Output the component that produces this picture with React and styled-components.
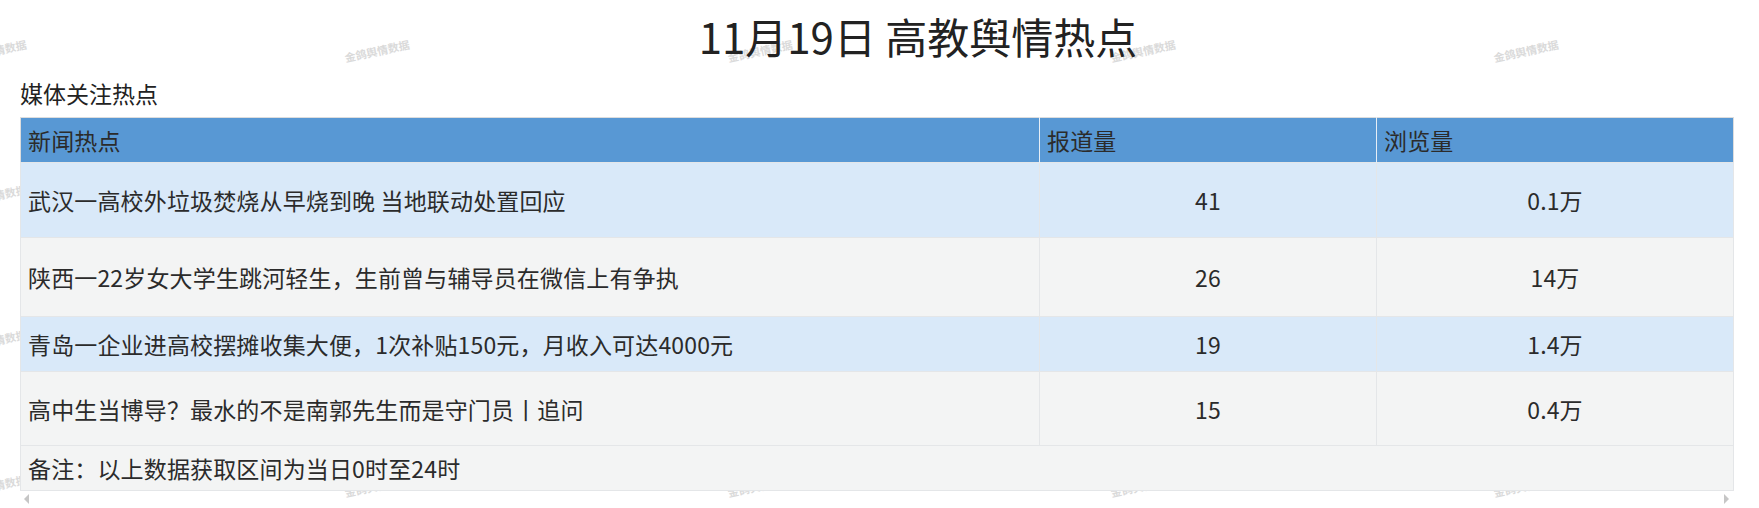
import React from "react";
import styled, { createGlobalStyle } from "styled-components";

const GlobalStyle = createGlobalStyle`
  html, body {
    margin: 0;
    padding: 0;
    background: #ffffff;
  }
  body {
    font-family: "Microsoft YaHei", "Noto Sans CJK SC", sans-serif;
    color: #333333;
  }
`;

const Page = styled.div`
  position: relative;
  width: 1759px;
  height: 508px;
  overflow: hidden;
  box-sizing: border-box;
  padding: 8px 26px 0 20px;
`;

const WatermarkLayer = styled.div`
  position: absolute;
  inset: 0;
  z-index: 0;
  pointer-events: none;
`;

const Watermark = styled.span`
  position: absolute;
  left: ${(p) => p.$x}px;
  top: ${(p) => p.$y}px;
  transform: translate(-50%, -50%) rotate(-12deg);
  font-size: 11px;
  font-weight: 700;
  line-height: 1;
  color: #dadada;
  white-space: nowrap;
`;

const Content = styled.div`
  position: relative;
  z-index: 1;
`;

const Title = styled.h1`
  margin: 0;
  padding-left: 83px;
  text-align: center;
  font-size: 42px;
  font-weight: 400;
  line-height: 56px;
  color: #222222;
`;

const Subtitle = styled.div`
  margin: 14px 0 9px;
  font-size: 23px;
  line-height: 30px;
  color: #222222;
`;

const Table = styled.table`
  width: 1713px;
  border-collapse: collapse;
  table-layout: fixed;
  border: 1px solid #dddddd;
  font-size: 23px;
  line-height: 30px;
  letter-spacing: 0.15px;
`;

const HeadRow = styled.tr`
  height: 45px;
  background: #5898d4;
`;

const HeadCell = styled.th`
  padding: 0 7px;
  text-align: left;
  font-weight: 400;
  color: #2b2b2b;
  border-right: 1px solid #e6eef6;
  &:last-child {
    border-right: none;
  }
`;

const Row = styled.tr`
  height: ${(p) => p.$h}px;
  background: ${(p) => (p.$tone === "blue" ? "#d9e9f9" : "#f3f4f4")};
`;

const Cell = styled.td`
  padding: 0 7px;
  text-align: ${(p) => (p.$center ? "center" : "left")};
  vertical-align: middle;
  color: #2b2b2b;
  border: 1px solid #e4e6e8;
  white-space: nowrap;
`;

const ScrollTrack = styled.div`
  width: 1713px;
  height: 12px;
  margin-top: 2px;
  display: flex;
  align-items: center;
  justify-content: space-between;
  box-sizing: border-box;
  padding: 0 4px;
`;

const Arrow = styled.span`
  width: 0;
  height: 0;
  border-top: 5px solid transparent;
  border-bottom: 5px solid transparent;
  ${(p) =>
    p.$dir === "left"
      ? "border-right: 5px solid #c6c6c6;"
      : "border-left: 5px solid #c6c6c6;"}
`;

const rows = [
  { title: "武汉一高校外垃圾焚烧从早烧到晚 当地联动处置回应", reports: "41", views: "0.1万", h: 75, tone: "blue" },
  { title: "陕西一22岁女大学生跳河轻生，生前曾与辅导员在微信上有争执", reports: "26", views: "14万", h: 79, tone: "gray" },
  { title: "青岛一企业进高校摆摊收集大便，1次补贴150元，月收入可达4000元", reports: "19", views: "1.4万", h: 55, tone: "blue" },
  { title: "高中生当博导？最水的不是南郭先生而是守门员丨追问", reports: "15", views: "0.4万", h: 74, tone: "gray" },
];

const markCols = [-6, 377, 760, 1143, 1526];
const markRows = [51, 196, 341, 486];

export default function App() {
  return (
    <>
      <GlobalStyle />
      <Page>
        <WatermarkLayer>
          {markRows.map((y) =>
            markCols.map((x) => (
              <Watermark key={`${x}-${y}`} $x={x} $y={y}>
                金鸽舆情数据
              </Watermark>
            ))
          )}
        </WatermarkLayer>
        <Content>
          <Title>11月19日 高教舆情热点</Title>
          <Subtitle>媒体关注热点</Subtitle>
          <Table>
            <colgroup>
              <col style={{ width: "1019px" }} />
              <col style={{ width: "337px" }} />
              <col style={{ width: "357px" }} />
            </colgroup>
            <thead>
              <HeadRow>
                <HeadCell>新闻热点</HeadCell>
                <HeadCell>报道量</HeadCell>
                <HeadCell>浏览量</HeadCell>
              </HeadRow>
            </thead>
            <tbody>
              {rows.map((r) => (
                <Row key={r.title} $h={r.h} $tone={r.tone}>
                  <Cell>{r.title}</Cell>
                  <Cell $center>{r.reports}</Cell>
                  <Cell $center>{r.views}</Cell>
                </Row>
              ))}
              <Row $h={45} $tone="gray">
                <Cell colSpan={3}>备注：以上数据获取区间为当日0时至24时</Cell>
              </Row>
            </tbody>
          </Table>
          <ScrollTrack>
            <Arrow $dir="left" />
            <Arrow $dir="right" />
          </ScrollTrack>
        </Content>
      </Page>
    </>
  );
}
